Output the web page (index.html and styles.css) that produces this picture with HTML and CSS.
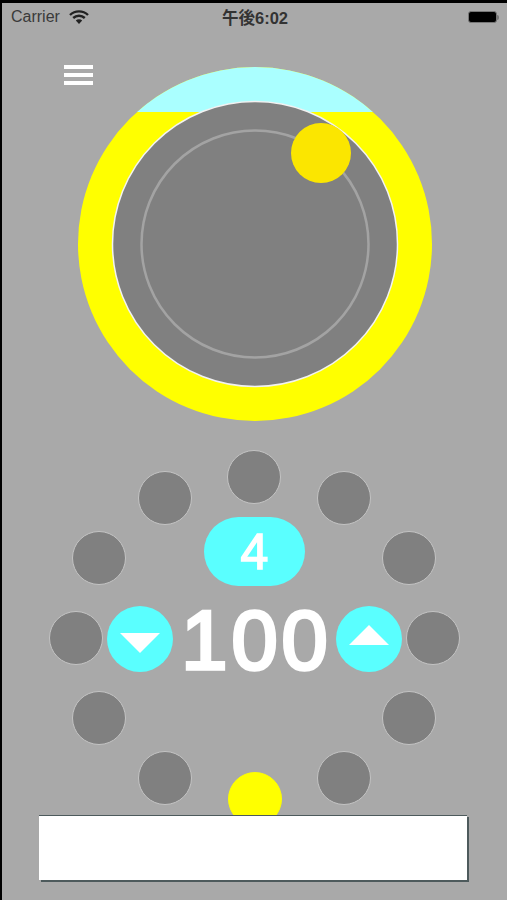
FILE: index.html
```html
<!DOCTYPE html>
<html lang="ja">
<head>
    <meta charset="UTF-8">
    <meta name="viewport" content="width=device-width, initial-scale=1.0">
    <title>Dial</title>
    <link rel="stylesheet" href="styles.css">
</head>
<body>
    <div class="screen">
        <div class="status-bar">
            <div class="status-left">
                <span class="carrier">Carrier</span>
                <svg class="wifi" width="20" height="14" viewBox="0 0 20 14">
                    <path d="M1 5 A13 13 0 0 1 19 5" fill="none" stroke="#222" stroke-width="2.4"/>
                    <path d="M4.2 8 A8.5 8.5 0 0 1 15.8 8" fill="none" stroke="#222" stroke-width="2.4"/>
                    <path d="M10 14 L6.8 10.6 A4.6 4.6 0 0 1 13.2 10.6 Z" fill="#222"/>
                </svg>
            </div>
            <div class="status-time">午後6:02</div>
            <div class="status-right">
                <div class="battery"></div>
                <div class="battery-nub"></div>
            </div>
        </div>

        <div class="dial-area">
            <button class="menu-btn">
                <span></span>
                <span></span>
                <span></span>
            </button>
            <svg class="dial" width="354" height="354" viewBox="0 0 354 354">
                <defs>
                    <clipPath id="capClip">
                        <rect x="0" y="0" width="354" height="45"/>
                    </clipPath>
                </defs>
                <circle cx="177" cy="177" r="177" fill="#ffff00"/>
                <circle cx="177" cy="177" r="177" fill="#aaffff" clip-path="url(#capClip)"/>
                <circle cx="177" cy="177" r="142.5" fill="#808080" stroke="#f2f2f2" stroke-width="1.5"/>
                <circle cx="177" cy="177" r="113.5" fill="none" stroke="#a3a3a3" stroke-width="2.5"/>
                <circle cx="243" cy="86" r="30" fill="#fbe600"/>
            </svg>
        </div>

        <div class="pad">
            <div class="dot dot-1"></div>
            <div class="dot dot-2"></div>
            <div class="dot dot-3"></div>
            <div class="dot dot-4"></div>
            <div class="dot dot-5"></div>
            <div class="dot dot-6"></div>
            <div class="dot dot-7 dot-active"></div>
            <div class="dot dot-8"></div>
            <div class="dot dot-9"></div>
            <div class="dot dot-10"></div>
            <div class="dot dot-11"></div>
            <div class="dot dot-12"></div>

            <div class="pill">4</div>
            <div class="stepper">
                <button class="step-btn">
                    <span class="arrow-down"></span>
                </button>
                <div class="value">100</div>
                <button class="step-btn">
                    <span class="arrow-up"></span>
                </button>
            </div>
        </div>

        <div class="banner"></div>
    </div>
</body>
</html>
```

FILE: styles.css
```css
* {
    margin: 0;
    padding: 0;
    box-sizing: border-box;
}

body {
    font-family: "Liberation Sans", "Noto Sans CJK JP", sans-serif;
}

.screen {
    width: 507px;
    height: 900px;
    background: #a9a9a9;
    border-top: 3px solid #000;
    border-left: 2px solid #000;
    overflow: hidden;
}

.status-bar {
    display: grid;
    grid-template-columns: 1fr auto 1fr;
    align-items: center;
    height: 28px;
    padding: 0 8px 0 9px;
    color: #333;
}

.status-left {
    display: flex;
    align-items: center;
    gap: 9px;
}

.carrier {
    font-size: 16px;
    color: #3a3a3a;
}

.status-time {
    font-size: 16.5px;
    font-weight: bold;
    color: #333;
}

.status-right {
    display: flex;
    align-items: center;
    justify-content: flex-end;
}

.battery {
    width: 29px;
    height: 12px;
    background: #000;
    border: 1px solid #777;
    border-radius: 3px;
}

.battery-nub {
    width: 2px;
    height: 5px;
    background: #777;
    border-radius: 0 2px 2px 0;
}

.dial-area {
    position: relative;
    display: flex;
    justify-content: center;
    padding-top: 36px;
}

.menu-btn {
    position: absolute;
    top: 34px;
    left: 62px;
    display: flex;
    flex-direction: column;
    gap: 4px;
    width: 29px;
    background: none;
    border: none;
}

.menu-btn span {
    display: block;
    height: 4px;
    background: #fff;
}

.pad {
    position: relative;
    display: flex;
    flex-direction: column;
    align-items: center;
    height: 365px;
    margin-top: 29px;
    padding-top: 67px;
}

.dot {
    position: absolute;
    width: 54px;
    height: 54px;
    background: #808080;
    border: 1px solid #c4c4c4;
    border-radius: 50%;
}

.dot-active {
    background: #ffff00;
    border-color: #ffff00;
}

.dot-1 { left: 225px; top: 0; }
.dot-2 { left: 315px; top: 21px; }
.dot-3 { left: 380px; top: 81px; }
.dot-4 { left: 404px; top: 161px; }
.dot-5 { left: 380px; top: 241px; }
.dot-6 { left: 315px; top: 301px; }
.dot-7 { left: 226px; top: 322px; }
.dot-8 { left: 136px; top: 301px; }
.dot-9 { left: 70px; top: 241px; }
.dot-10 { left: 47px; top: 161px; }
.dot-11 { left: 70px; top: 81px; }
.dot-12 { left: 136px; top: 21px; }

.pill {
    width: 101px;
    height: 69px;
    background: #5affff;
    border-radius: 35px;
    color: #fff;
    font-size: 50px;
    line-height: 70px;
    text-align: center;
    -webkit-text-stroke: 1.5px #fff;
}

.stepper {
    display: flex;
    align-items: center;
    margin-top: 20px;
}

.step-btn {
    display: flex;
    align-items: center;
    justify-content: center;
    width: 66px;
    height: 66px;
    background: #5affff;
    border: none;
    border-radius: 50%;
}

.arrow-down {
    width: 0;
    height: 0;
    margin-top: 8px;
    border-left: 20px solid transparent;
    border-right: 20px solid transparent;
    border-top: 20px solid #fff;
}

.arrow-up {
    width: 0;
    height: 0;
    margin-top: -8px;
    border-left: 20px solid transparent;
    border-right: 20px solid transparent;
    border-bottom: 20px solid #fff;
}

.value {
    width: 163px;
    height: 66px;
    padding-left: 4px;
    color: #fff;
    font-size: 83px;
    letter-spacing: 4px;
    line-height: 69px;
    text-align: center;
    -webkit-text-stroke: 3.5px #fff;
}

.banner {
    position: relative;
    width: 428px;
    height: 65px;
    margin-left: 37px;
    background: #fff;
    border-top: 1px solid #4d5a5c;
    box-shadow: 2px 2px 0 #4d5a5c;
}
```
